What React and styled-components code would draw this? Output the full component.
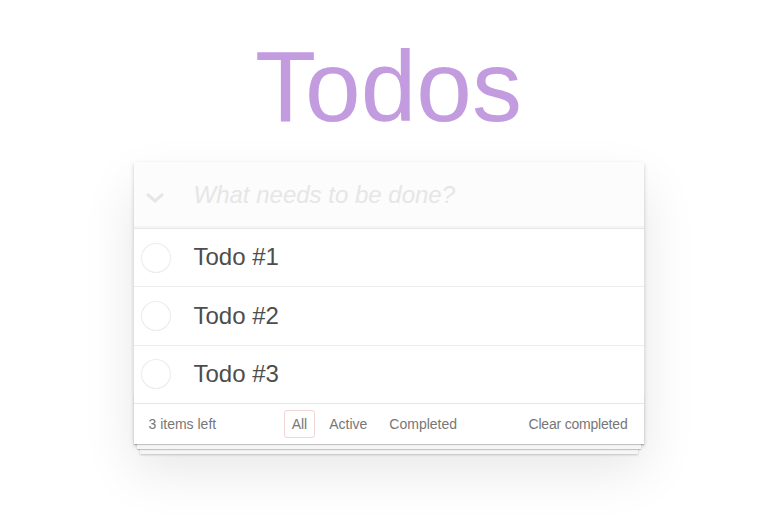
import React from 'react';
import styled, { createGlobalStyle } from 'styled-components';

const Global = createGlobalStyle`
  html { background: #fff; }
  body {
    margin: 0;
    padding: 0;
    font-family: "Liberation Sans", Arial, sans-serif;
    color: #4d4d4d;
    -webkit-font-smoothing: antialiased;
  }
`;

const Page = styled.div`
  padding: 0 4px 90px 0;
`;

const Inner = styled.div`
  width: 510px;
  margin: 0 auto;
`;

const Title = styled.h1`
  margin: 36px 0 26px;
  text-align: center;
  font-size: 100px;
  line-height: 100px;
  font-weight: 100;
  color: #c39cdf;
`;

const Card = styled.section`
  position: relative;
  isolation: isolate;
  background: #fff;
  box-shadow: 0 2px 4px rgba(0,0,0,0.2), 0 25px 50px rgba(0,0,0,0.1);
`;

const Header = styled.div`
  display: flex;
  align-items: center;
  height: 66px;
  background: #fcfcfc;
  box-shadow: inset 0 -2px 1px rgba(0,0,0,0.03);
`;

const ToggleAll = styled.div`
  width: 60px;
  height: 66px;
  display: flex;
  align-items: center;
  padding: 6px 0 0 11px;
  box-sizing: border-box;
`;

const NewTodo = styled.div`
  font-size: 24px;
  font-style: italic;
  font-weight: 300;
  color: #e6e6e6;
`;

const List = styled.ul`
  list-style: none;
  margin: 0;
  padding: 0;
  border-top: 1px solid #e6e6e6;
`;

const Item = styled.li`
  display: flex;
  align-items: center;
  height: 57.3px;
  border-bottom: 1px solid #ededed;
  font-size: 24px;
  &:last-child { border-bottom: none; }
`;

const Toggle = styled.div`
  width: 60px;
  display: flex;
  align-items: center;
  padding-left: 6px;
  box-sizing: border-box;
`;

const Label = styled.span`
  color: #4d4d4d;
  line-height: 1.2;
`;

const Footer = styled.footer`
  position: relative;
  display: flex;
  align-items: center;
  justify-content: space-between;
  height: 40px;
  padding: 0 16px 0 15px;
  border-top: 1px solid #e6e6e6;
  font-size: 14px;
  color: #777;
  &::before {
    content: '';
    position: absolute;
    left: 0; right: 0; bottom: 0;
    height: 50px;
    z-index: -1;
    box-shadow: 0 1px 1px rgba(0,0,0,0.2),
      0 8px 0 -3px #f6f6f6,
      0 9px 1px -3px rgba(0,0,0,0.2),
      0 16px 0 -6px #f6f6f6,
      0 17px 2px -6px rgba(0,0,0,0.2);
  }
`;

const Filters = styled.ul`
  display: flex;
  list-style: none;
  margin: 0 0 0 4px;
  padding: 0;
`;

const Filter = styled.li`
  margin: 3px;
  padding: 3px 7px;
  line-height: 20px;
  border: 1px solid ${({ selected }) => (selected ? 'rgba(175,47,47,0.2)' : 'transparent')};
  border-radius: 3px;
  color: #777;
`;

const Clear = styled.span`
  color: #777;
  letter-spacing: -0.2px;
`;

const Chevron = () => (
  <svg width="20" height="12" viewBox="0 0 20 12">
    <polyline points="2,2 10,9 18,2" fill="none" stroke="#e6e6e6" strokeWidth="3" />
  </svg>
);

const Circle = () => (
  <svg width="32" height="32" viewBox="0 0 32 32">
    <circle cx="16" cy="16" r="14.5" fill="none" stroke="#ededed" strokeWidth="1.2" />
  </svg>
);

const todos = ['Todo #1', 'Todo #2', 'Todo #3'];

export default function App() {
  return (
    <Page>
      <Global />
      <Inner>
        <Title>Todos</Title>
        <Card>
          <Header>
            <ToggleAll><Chevron /></ToggleAll>
            <NewTodo>What needs to be done?</NewTodo>
          </Header>
          <List>
            {todos.map(t => (
              <Item key={t}>
                <Toggle><Circle /></Toggle>
                <Label>{t}</Label>
              </Item>
            ))}
          </List>
          <Footer>
            <span>3 items left</span>
            <Filters>
              <Filter selected>All</Filter>
              <Filter>Active</Filter>
              <Filter>Completed</Filter>
            </Filters>
            <Clear>Clear completed</Clear>
          </Footer>
        </Card>
      </Inner>
    </Page>
  );
}
